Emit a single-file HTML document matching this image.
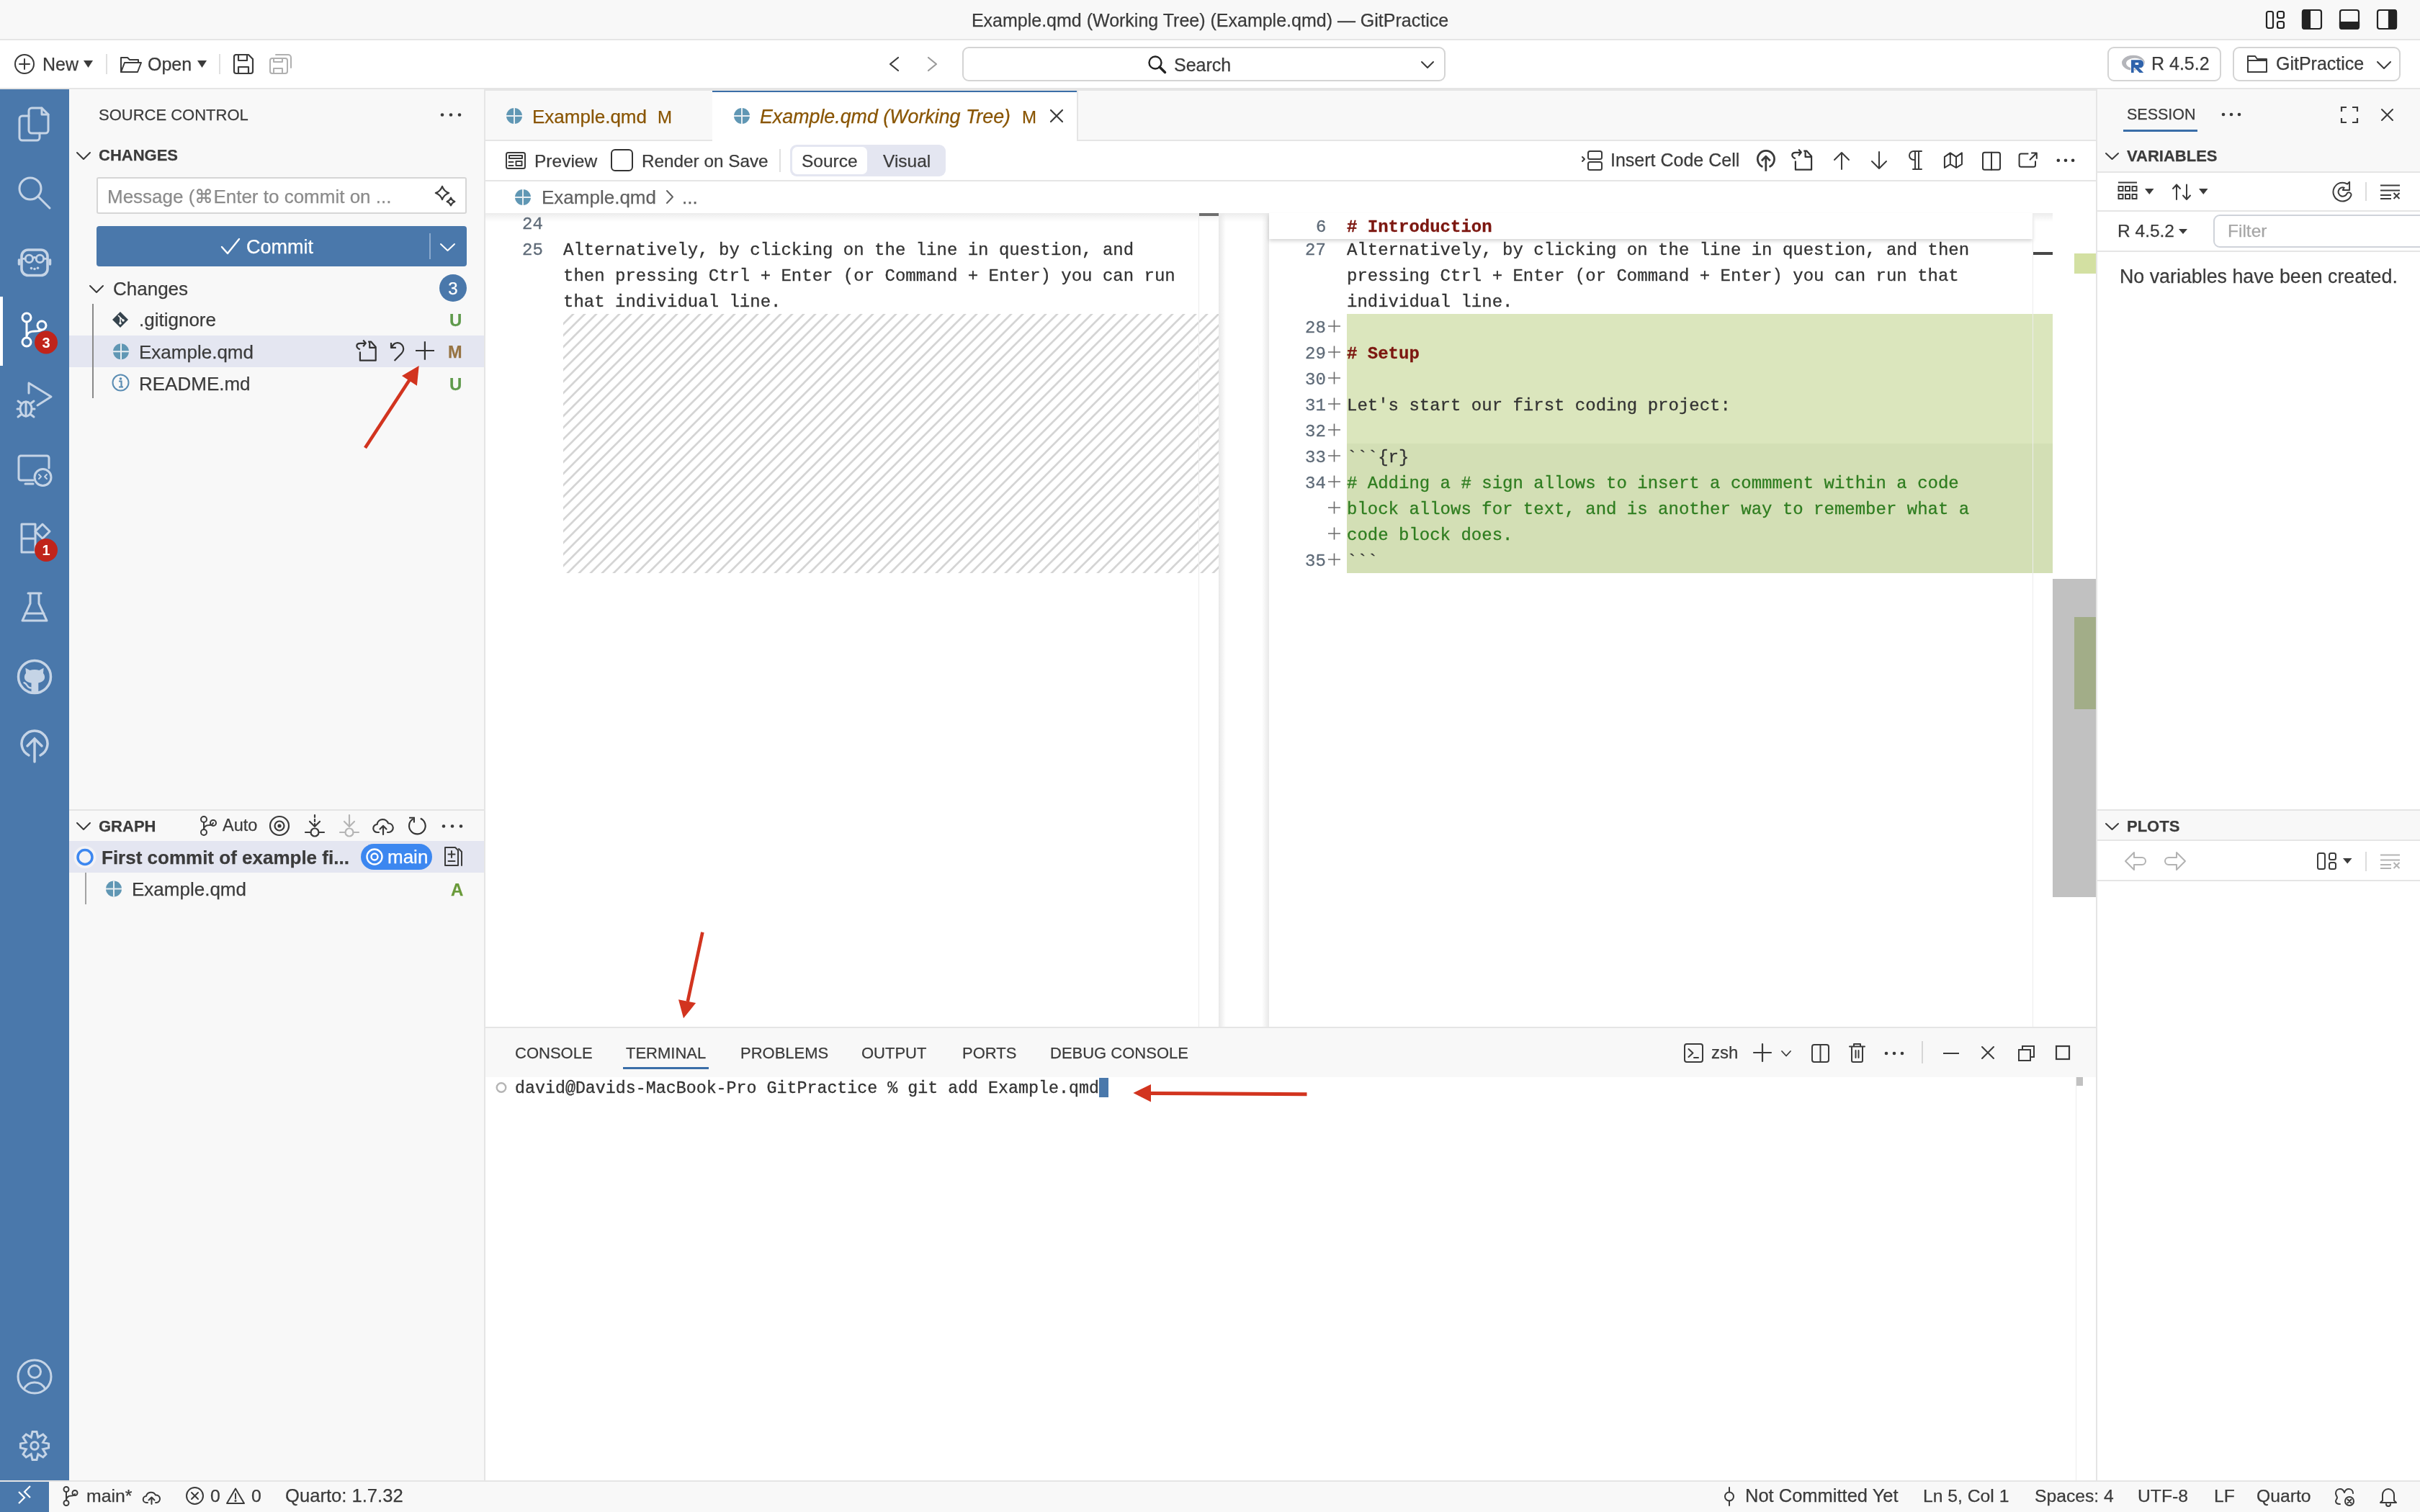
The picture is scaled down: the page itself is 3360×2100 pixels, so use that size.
<!DOCTYPE html>
<html><head><meta charset="utf-8">
<style>
*{box-sizing:border-box;margin:0;padding:0}
html,body{width:3360px;height:2100px;overflow:hidden;background:#fff;font-family:"Liberation Sans",sans-serif;color:#3b3b3b}
.a{position:absolute}
.t{position:absolute;white-space:pre;line-height:1;will-change:transform;-webkit-text-stroke:0.25px currentColor}
.m{font-family:"Liberation Mono",monospace;-webkit-text-stroke:0.3px currentColor}
svg{position:absolute;overflow:visible}
</style></head><body>
<div class="a" style="left:0px;top:0px;width:3360px;height:56px;background:#f8f8f8;border-bottom:2px solid #e5e5e5"></div>
<div class="a" style="left:0px;top:56px;width:3360px;height:68px;background:#fff;border-bottom:2px solid #e5e5e5"></div>
<div class="a" style="left:0px;top:124px;width:96px;height:1932px;background:#4a78ab"></div>
<div class="a" style="left:96px;top:124px;width:578px;height:1932px;background:#f8f8f8;border-right:2px solid #e5e5e5"></div>
<div class="a" style="left:674px;top:124px;width:2236px;height:1302px;background:#fff"></div>
<div class="a" style="left:674px;top:124px;width:2236px;height:72px;background:#f8f8f8;border-top:2px solid #e5e5e5;border-bottom:2px solid #e5e5e5"></div>
<div class="a" style="left:674px;top:196px;width:2236px;height:56px;background:#fff;border-bottom:2px solid #e5e5e5"></div>
<div class="a" style="left:2910px;top:124px;width:450px;height:1932px;background:#f8f8f8;border-left:2px solid #e5e5e5"></div>
<div class="a" style="left:674px;top:1426px;width:2236px;height:630px;background:#fff;border-top:2px solid #e5e5e5"></div>
<div class="a" style="left:674px;top:1428px;width:2236px;height:68px;background:#f8f8f8"></div>
<div class="a" style="left:0px;top:2056px;width:3360px;height:44px;background:#f8f8f8;border-top:2px solid #e5e5e5"></div>
<div class="a" style="left:0px;top:2058px;width:68px;height:42px;background:#4a78ab"></div>
<div class="t " style="top:15.8px;font-size:25px;color:#3b3b3b;left:1680px;transform:translateX(-50%);">Example.qmd (Working Tree) (Example.qmd) — GitPractice</div>
<svg style="left:3146px;top:15px" width="26" height="25" viewBox="0 0 26 25" fill="none" stroke="#222" stroke-width="2.2" stroke-linecap="round" stroke-linejoin="round" ><rect x="1" y="1" width="9" height="23" rx="2.5"/><rect x="16" y="1" width="9" height="9" rx="2.5"/><rect x="16" y="15" width="9" height="9" rx="2.5"/></svg>
<svg style="left:3196px;top:13px" width="28" height="28" viewBox="0 0 28 28" fill="none" stroke="#222" stroke-width="2.2" stroke-linecap="round" stroke-linejoin="round" ><rect x="1" y="1" width="26" height="26" rx="3"/><path d="M1 4a3 3 0 0 1 3-3h7v26H4a3 3 0 0 1-3-3z" fill="#222"/></svg>
<svg style="left:3248px;top:13px" width="28" height="28" viewBox="0 0 28 28" fill="none" stroke="#222" stroke-width="2.2" stroke-linecap="round" stroke-linejoin="round" ><rect x="1" y="1" width="26" height="26" rx="3"/><path d="M1 18h26v6a3 3 0 0 1-3 3H4a3 3 0 0 1-3-3z" fill="#222"/></svg>
<svg style="left:3300px;top:13px" width="28" height="28" viewBox="0 0 28 28" fill="none" stroke="#222" stroke-width="2.2" stroke-linecap="round" stroke-linejoin="round" ><rect x="1" y="1" width="26" height="26" rx="3"/><path d="M17 1h7a3 3 0 0 1 3 3v20a3 3 0 0 1-3 3h-7z" fill="#222"/></svg>
<svg style="left:20px;top:75px" width="28" height="28" viewBox="0 0 28 28" fill="none" stroke="#3b3b3b" stroke-width="2" stroke-linecap="round" stroke-linejoin="round" ><circle cx="14" cy="14" r="13"/><path d="M14 7v14M7 14h14"/></svg>
<div class="t " style="top:76.8px;font-size:25px;color:#3b3b3b;left:59px;">New</div>
<svg style="left:116px;top:84px" width="13" height="10" viewBox="0 0 13 10" fill="none" stroke="#3b3b3b" stroke-width="2" stroke-linecap="round" stroke-linejoin="round" ><path d="M0 0h13L6.5 10z" fill="#3b3b3b" stroke="none"/></svg>
<div class="a" style="left:147px;top:75px;width:2px;height:28px;background:#e0e0e0"></div>
<svg style="left:167px;top:78px" width="30" height="23" viewBox="0 0 30 23" fill="none" stroke="#3b3b3b" stroke-width="2" stroke-linecap="round" stroke-linejoin="round" ><path d="M1 22V2h9l3 3h12v4"/><path d="M1 22l5-13h23l-5 13z"/></svg>
<div class="t " style="top:76.8px;font-size:25px;color:#3b3b3b;left:205px;">Open</div>
<svg style="left:274px;top:84px" width="13" height="10" viewBox="0 0 13 10" fill="none" stroke="#3b3b3b" stroke-width="2" stroke-linecap="round" stroke-linejoin="round" ><path d="M0 0h13L6.5 10z" fill="#3b3b3b" stroke="none"/></svg>
<div class="a" style="left:304px;top:75px;width:2px;height:28px;background:#e0e0e0"></div>
<svg style="left:324px;top:75px" width="28" height="28" viewBox="0 0 28 28" fill="none" stroke="#3b3b3b" stroke-width="2.2" stroke-linecap="round" stroke-linejoin="round" ><path d="M3 1h18l6 6v17a3 3 0 0 1-3 3H4a3 3 0 0 1-3-3V4a3 3 0 0 1 2-3z"/><path d="M7 1v8h12V1M7 27v-9h14v9"/></svg>
<svg style="left:374px;top:75px" width="31" height="28" viewBox="0 0 31 28" fill="none" stroke="#b0b0b0" stroke-width="2" stroke-linecap="round" stroke-linejoin="round" ><path d="M9 1h17a4 4 0 0 1 4 4v14"/><rect x="1" y="6" width="24" height="21" rx="3"/><path d="M6 27v-7h12v7M6 6v5h12V6"/></svg>
<svg style="left:1234px;top:79px" width="15" height="20" viewBox="0 0 15 20" fill="none" stroke="#3b3b3b" stroke-width="2.2" stroke-linecap="round" stroke-linejoin="round" ><path d="M13 1L2 10l11 9"/></svg>
<svg style="left:1288px;top:79px" width="14" height="20" viewBox="0 0 14 20" fill="none" stroke="#9a9a9a" stroke-width="2.2" stroke-linecap="round" stroke-linejoin="round" ><path d="M1 1l11 9-11 9"/></svg>
<div class="a" style="left:1336px;top:65px;width:671px;height:48px;border:2px solid #d4d4d4;border-radius:9px;background:#fff"></div>
<svg style="left:1594px;top:77px" width="25" height="25" viewBox="0 0 25 25" fill="none" stroke="#222" stroke-width="2.4" stroke-linecap="round" stroke-linejoin="round" ><circle cx="10" cy="10" r="8.5"/><path d="M16 16l7.5 7.5" stroke-width="3.5"/></svg>
<div class="t " style="top:77.8px;font-size:25px;color:#3b3b3b;left:1630px;">Search</div>
<svg style="left:1973px;top:85px" width="18" height="10" viewBox="0 0 18 10" fill="none" stroke="#3b3b3b" stroke-width="2" stroke-linecap="round" stroke-linejoin="round" ><path d="M1 1l8 8 8-8"/></svg>
<div class="a" style="left:2926px;top:65px;width:158px;height:48px;border:2px solid #d4d4d4;border-radius:9px;background:#fff"></div>
<svg style="left:2946px;top:76px" width="32" height="26" viewBox="0 0 32 26"><path fill-rule="evenodd" fill="#b4b5ba" d="M15.9 0.7a15.9 10.6 0 1 0 0.01 0zM18 4.8a12 7.1 0 1 0 0.01 0z"/><g fill="#2f63ab" stroke="#fff" stroke-width="1.4" style="paint-order:stroke"><path fill-rule="evenodd" d="M13 7.3h13a4.2 5.3 0 0 1 0 10.7h-2.5l6.7 7h-5.7l-6.7-7h-1.2V25H13zM18.6 11v3.1h4.6v-3.1z"/></g></svg>
<div class="t " style="top:76.2px;font-size:25px;color:#3b3b3b;left:2987px;">R 4.5.2</div>
<div class="a" style="left:3100px;top:65px;width:233px;height:48px;border:2px solid #d4d4d4;border-radius:9px;background:#fff"></div>
<svg style="left:3120px;top:77px" width="28" height="24" viewBox="0 0 28 24" fill="none" stroke="#3b3b3b" stroke-width="2" stroke-linecap="round" stroke-linejoin="round" ><path d="M1 23V1h10l3 4h13v18z"/><path d="M1 7h26"/></svg>
<div class="t " style="top:76.2px;font-size:25px;color:#3b3b3b;left:3160px;">GitPractice</div>
<svg style="left:3300px;top:85px" width="20" height="11" viewBox="0 0 20 11" fill="none" stroke="#3b3b3b" stroke-width="2" stroke-linecap="round" stroke-linejoin="round" ><path d="M1 1l9 9 9-9"/></svg>
<div class="a" style="left:0px;top:412px;width:4px;height:96px;background:#fff"></div>
<svg style="left:0;top:0" width="96" height="2100" viewBox="0 0 96 2100">
<g stroke="#c5d4e6" stroke-width="3" fill="none" stroke-linecap="round" stroke-linejoin="round">
 <!-- explorer -->
 <path d="M40 160v-6a4 4 0 0 1 4-4h14l9 9v22a4 4 0 0 1-4 4H44a4 4 0 0 1-4-4z"/>
 <path d="M58 150v9h9"/>
 <path d="M40 161h-9a4 4 0 0 0-4 4v26a4 4 0 0 0 4 4h20a4 4 0 0 0 4-4v-6"/>
 <!-- search -->
 <circle cx="42" cy="262" r="15"/>
 <path d="M53 273l16 16"/>
 <!-- assistant robot -->
 <rect x="30" y="347" width="36" height="35.5" rx="9" stroke-width="3.6"/>
 <path d="M26.5 361v6M69.5 361v6" stroke-width="3.5"/>
 <circle cx="40.4" cy="359.4" r="5.2" stroke-width="2.8"/><circle cx="55.4" cy="359.4" r="5.2" stroke-width="2.8"/>
 <path d="M45.5 358.5q2.5-2 4.8 0M30 359.4h5.2M60.6 359.4h5.4" stroke-width="2.8"/>
</g>
<g fill="#c5d4e6"><circle cx="43.5" cy="372.6" r="1.8"/><circle cx="48" cy="373.5" r="1.8"/><circle cx="52.5" cy="372.3" r="1.8"/></g>
<!-- source control (active, white) -->
<g stroke="#fff" stroke-width="3" fill="none">
 <circle cx="37" cy="441" r="6"/><circle cx="37" cy="475" r="6"/><circle cx="58" cy="452" r="6"/>
 <path d="M37 447v22M37 469c0-8 6-9 12-9s9-2 9-2"/>
</g>
<circle cx="64" cy="475.5" r="16" fill="#c0241b"/>
<text x="64" y="482.5" font-family="Liberation Sans" font-weight="bold" font-size="20" fill="#fff" text-anchor="middle">3</text>
<g stroke="#c5d4e6" stroke-width="3" fill="none" stroke-linecap="round" stroke-linejoin="round">
 <!-- run & debug -->
 <path d="M40 532l31 19-19 12M40 532v14"/>
 <ellipse cx="36" cy="568" rx="8" ry="10"/>
 <path d="M28 568h-4M44 568h4M29 560l-4-3M43 560l4-3M29 576l-4 3M43 576l4 3M36 558v20"/>
 <!-- remote explorer -->
 <path d="M46 667H29a3 3 0 0 1-3-3V636a3 3 0 0 1 3-3h36a3 3 0 0 1 3 3v14"/>
 <path d="M35 672h11"/>
 <circle cx="59.5" cy="663" r="11.5"/>
 <path d="M54 659l3 3-3 3M65 659l-3 3 3 3" stroke-width="2"/>
 <!-- extensions -->
 <path d="M30 728h19v39H30zM30 748h19"/>
 <path d="M49 738l10-10 10 10-10 10z"/>
 <!-- testing flask -->
 <path d="M39 824h18M42 824v14l-11 24h34l-11-24v-14M35 852h26"/>
</g>
<circle cx="64" cy="764" r="16" fill="#c0241b"/>
<text x="64" y="771" font-family="Liberation Sans" font-weight="bold" font-size="20" fill="#fff" text-anchor="middle">1</text>
<!-- github -->
<circle cx="48" cy="940" r="22.5" stroke="#c5d4e6" stroke-width="3.5" fill="none"/>
<path d="M36 935l-0.6-7.2 6.2 3.2c1.8-.6 4-.9 6.4-.9s4.6.3 6.4.9l6.2-3.2-.6 7.2c1.3 1.5 2.1 3.4 2.1 5.4 0 5-4.6 8.4-14.1 8.4s-14.1-3.4-14.1-8.4c0-2 .8-3.9 2.1-5.4z" fill="#c5d4e6"/>
<path d="M43.5 947h9.8v14.5h-9.8z" fill="#c5d4e6"/>
<path d="M33.5 948.3c2.2.4 3.2 2.2 4.4 4s2.8 3.2 5 3.2" stroke="#c5d4e6" stroke-width="2.4" fill="none" stroke-linecap="round"/>
<!-- publish -->
<g stroke="#c5d4e6" stroke-width="3.5" fill="none" stroke-linecap="round">
 <path d="M40 1049a18 18 0 1 1 16 0"/>
 <path d="M48 1058v-32M38 1036l10-10 10 10"/>
</g>
<!-- accounts -->
<g stroke="#c5d4e6" stroke-width="3" fill="none">
 <circle cx="48" cy="1912" r="23"/>
 <circle cx="48" cy="1905" r="8.5"/>
 <path d="M33 1930c3-7 8-10 15-10s12 3 15 10"/>
</g>
<!-- settings gear -->
<g stroke="#c5d4e6" stroke-width="3" fill="none" stroke-linejoin="miter">
 <circle cx="48" cy="2008" r="5.2"/>
 <path d="M43.18 1996.36 L45.07 1988.42 L50.93 1988.42 L52.82 1996.36 L59.78 1992.08 L63.92 1996.22 L59.64 2003.18 L67.58 2005.07 L67.58 2010.93 L59.64 2012.82 L63.92 2019.78 L59.78 2023.92 L52.82 2019.64 L50.93 2027.58 L45.07 2027.58 L43.18 2019.64 L36.22 2023.92 L32.08 2019.78 L36.36 2012.82 L28.42 2010.93 L28.42 2005.07 L36.36 2003.18 L32.08 1996.22 L36.22 1992.08z"/>
</g>
</svg>
<svg style="left:0;top:2058px" width="68" height="42" viewBox="0 0 68 42"><path d="M26 14l8 8-8 8M42 6l-8 8 8 8" stroke="#fff" stroke-width="2.2" fill="none"/></svg>
<div class="t " style="top:148.8px;font-size:22px;color:#3b3b3b;left:137px;">SOURCE CONTROL</div>
<svg style="left:0;top:0" width="1" height="1" overflow="visible"><g fill="#3b3b3b"><circle cx="614" cy="159.5" r="2.3"/><circle cx="626" cy="159.5" r="2.3"/><circle cx="638" cy="159.5" r="2.3"/></g></svg>
<svg style="left:106px;top:211px" width="20" height="11" viewBox="0 0 20 11" fill="none" stroke="#3b3b3b" stroke-width="2" stroke-linecap="round" stroke-linejoin="round" ><path d="M1 1l9 9 9-9"/></svg>
<div class="t " style="top:205.3px;font-size:22px;color:#3b3b3b;font-weight:700;left:137px;">CHANGES</div>
<div class="a" style="left:134px;top:246px;width:514px;height:51px;background:#fff;border:2px solid #d6d6d6;border-radius:3px"></div>
<div class="t " style="top:260.4px;font-size:26px;color:#8b8b8b;left:149px;">Message (⌘Enter to commit on ...</div>
<svg style="left:596px;top:250px" width="44" height="44" viewBox="0 0 44 44" fill="none" stroke="#3b3b3b" stroke-width="2.2" stroke-linecap="round" stroke-linejoin="round" ><path d="M18 8.8C19.656 13.4 22.6 16.344 27.2 18C22.6 19.656 19.656 22.6 18 27.2C16.344 22.6 13.4 19.656 8.8 18C13.4 16.344 16.344 13.4 18 8.8z"/><path d="M30 24.6C30.972 27.3 32.7 29.028 35.4 30C32.7 30.972 30.972 32.7 30 35.4C29.028 32.7 27.3 30.972 24.6 30C27.3 29.028 29.028 27.3 30 24.6z"/></svg>
<div class="a" style="left:134px;top:314px;width:514px;height:56px;background:#4a78ab;border-radius:4px"></div>
<svg style="left:307px;top:331px" width="26" height="22" viewBox="0 0 26 22" fill="none" stroke="#fff" stroke-width="2.4" stroke-linecap="round" stroke-linejoin="round" ><path d="M1 12l8 9L25 1"/></svg>
<div class="t " style="top:329.6px;font-size:27px;color:#fff;left:342px;">Commit</div>
<div class="a" style="left:596px;top:324px;width:2px;height:36px;background:#8aa9cc"></div>
<svg style="left:611px;top:338px" width="21" height="11" viewBox="0 0 21 11" fill="none" stroke="#fff" stroke-width="2" stroke-linecap="round" stroke-linejoin="round" ><path d="M1 1l9.5 9 9.5-9"/></svg>
<svg style="left:124px;top:396px" width="20" height="11" viewBox="0 0 20 11" fill="none" stroke="#3b3b3b" stroke-width="2" stroke-linecap="round" stroke-linejoin="round" ><path d="M1 1l9 9 9-9"/></svg>
<div class="t " style="top:387.9px;font-size:26px;color:#3b3b3b;left:157px;">Changes</div>
<svg style="left:0;top:0" width="1" height="1" overflow="visible"><circle cx="629" cy="400" r="19" fill="#4a78ab"/></svg>
<div class="t " style="top:389.1px;font-size:24px;color:#fff;left:629px;transform:translateX(-50%);">3</div>
<div class="a" style="left:96px;top:466px;width:576px;height:44px;background:#e4e6f1"></div>
<div class="a" style="left:128px;top:422px;width:2px;height:131px;background:#8a8a8a"></div>
<svg style="left:156px;top:433px" width="22" height="22" viewBox="0 0 22 22"><path d="M11 0l11 11-11 11L0 11z" fill="#35434d"/><path d="M8 5l3 3v8M11 8l4 4" stroke="#f8f8f8" stroke-width="1.6" fill="none"/><circle cx="11" cy="16" r="1.8" fill="#f8f8f8"/><circle cx="15" cy="12" r="1.8" fill="#f8f8f8"/></svg>
<div class="t " style="top:431.4px;font-size:26px;color:#3b3b3b;left:193px;">.gitignore</div>
<div class="t " style="top:433.1px;font-size:24px;color:#5f9a4c;font-weight:700;left:624px;">U</div>
<svg style="left:0;top:0" width="1" height="1" overflow="visible"><circle cx="168" cy="488.3" r="11" fill="#6097b4"/><path d="M168 477.3v22M157 488.3h22" stroke="#e8eef2" stroke-width="2"/></svg>
<div class="t " style="top:475.9px;font-size:26px;color:#3b3b3b;left:193px;">Example.qmd</div>
<svg style="left:488px;top:466px" width="160" height="44" viewBox="0 0 160 44" fill="none" stroke="#333" stroke-width="2.2" stroke-linecap="butt" stroke-linejoin="round"><path d="M11.9 19.2C8.5 18 7.3 16 7.3 14.5 7.3 12 9.5 10.8 12 10.8h7.8M16.2 6.6l3.6 4-3.6 4.6"/><path d="M11.9 22.5v12.2h21.8V15.9l-6.6-7.3h-4M25.2 8.6v8.3h8.5"/><path d="M55 9.9v7h6.9M56 16C58 12 61 10.2 64 10.2c4.8 0 8.2 4 8.2 8.5 0 2.6-1.2 4.5-2.8 6.2L59.6 35"/><path d="M89 21h26M101.9 8.3v25.5"/></svg>
<div class="t " style="top:477.5px;font-size:23.5px;color:#977443;font-weight:700;left:622px;">M</div>
<svg style="left:155px;top:519px" width="25" height="25" viewBox="0 0 25 25"><circle cx="12.5" cy="12.5" r="11" stroke="#5b8db3" stroke-width="2" fill="none"/><circle cx="12.5" cy="7" r="1.8" fill="#5b8db3"/><path d="M10 10.5h3.5v8M10 18.5h6" stroke="#5b8db3" stroke-width="2.2" fill="none"/></svg>
<div class="t " style="top:519.9px;font-size:26px;color:#3b3b3b;left:193px;">README.md</div>
<div class="t " style="top:521.6px;font-size:24px;color:#5f9a4c;font-weight:700;left:624px;">U</div>
<div class="a" style="left:96px;top:1124px;width:576px;height:2px;background:#e5e5e5"></div>
<svg style="left:106px;top:1142px" width="20" height="11" viewBox="0 0 20 11" fill="none" stroke="#3b3b3b" stroke-width="2" stroke-linecap="round" stroke-linejoin="round" ><path d="M1 1l9 9 9-9"/></svg>
<div class="t " style="top:1136.8px;font-size:22px;color:#3b3b3b;font-weight:700;left:137px;">GRAPH</div>
<svg style="left:278px;top:1133px" width="22" height="27" viewBox="0 0 22 27" fill="none" stroke="#3b3b3b" stroke-width="2" stroke-linecap="round" stroke-linejoin="round" ><circle cx="5" cy="5" r="4"/><circle cx="5" cy="23" r="4"/><circle cx="18" cy="10" r="4"/><path d="M5 9v10M5 19c0-5 4-6 8-6s5-3 5-3"/></svg>
<div class="t " style="top:1135.0px;font-size:23.5px;color:#3b3b3b;left:308.5px;">Auto</div>
<svg style="left:374px;top:1133px" width="28" height="28" viewBox="0 0 28 28" fill="none" stroke="#3b3b3b" stroke-width="2.2" stroke-linecap="round" stroke-linejoin="round" ><circle cx="14" cy="14" r="13"/><circle cx="14" cy="14" r="6.5"/><circle cx="14" cy="14" r="1.5" fill="#3b3b3b"/></svg>
<svg style="left:424px;top:1131px" width="26" height="32" viewBox="0 0 26 32" fill="none" stroke="#3b3b3b" stroke-width="2.2" stroke-linecap="round" stroke-linejoin="round" ><path d="M13 1v3M13 7v3M13 13v3" /><path d="M6 10l7 7 7-7"/><circle cx="13" cy="25" r="5.5"/><path d="M0 25h7.5M18.5 25H26"/></svg>
<svg style="left:472px;top:1131px" width="26" height="32" viewBox="0 0 26 32" fill="none" stroke="#b5b5b5" stroke-width="2.2" stroke-linecap="round" stroke-linejoin="round" ><path d="M13 1v16"/><path d="M6 10l7 7 7-7"/><circle cx="13" cy="25" r="5.5"/><path d="M0 25h7.5M18.5 25H26"/></svg>
<svg style="left:518px;top:1136px" width="28" height="24" viewBox="0 0 28 24" fill="none" stroke="#3b3b3b" stroke-width="2.2" stroke-linecap="round" stroke-linejoin="round" ><path d="M8 20H6a5.5 5.5 0 0 1-.5-11A8 8 0 0 1 21 7.5 6 6 0 0 1 22 20h-2"/><path d="M14 23V11M9.5 15.5L14 11l4.5 4.5"/></svg>
<svg style="left:0;top:0" width="1" height="1" overflow="visible"><g fill="none" stroke="#333" stroke-width="2.1"><path d="M583.8 1136.7A11.3 11.3 0 1 1 573.5 1137.4"/><path d="M568.1 1135.8H574.9V1142.6"/></g></svg>
<svg style="left:0;top:0" width="1" height="1" overflow="visible"><g fill="#3b3b3b"><circle cx="616" cy="1147.5" r="2.3"/><circle cx="628" cy="1147.5" r="2.3"/><circle cx="640" cy="1147.5" r="2.3"/></g></svg>
<div class="a" style="left:96px;top:1168px;width:576px;height:44px;background:#e4e6f1"></div>
<svg style="left:0;top:0" width="1" height="1" overflow="visible"><circle cx="118" cy="1190.5" r="15.5" fill="#f3f3f6"/><circle cx="118" cy="1190.5" r="10" stroke="#3c87f0" stroke-width="3.5" fill="none"/></svg>
<div class="t " style="top:1178.4px;font-size:26px;color:#3b3b3b;font-weight:700;left:140.5px;">First commit of example fi...</div>
<div class="a" style="left:501px;top:1172px;width:99px;height:36px;background:#3c87f0;border-radius:18px"></div>
<svg style="left:508px;top:1178px" width="24" height="24" viewBox="0 0 24 24" fill="none" stroke="#fff" stroke-width="2.4" stroke-linecap="round" stroke-linejoin="round" ><circle cx="12" cy="12" r="10.5"/><circle cx="12" cy="12" r="4.5"/></svg>
<div class="t " style="top:1177.4px;font-size:26px;color:#fff;left:538px;">main</div>
<svg style="left:615px;top:1176px" width="29" height="28" viewBox="0 0 29 28" fill="none" stroke="#3b3b3b" stroke-width="2" stroke-linecap="round" stroke-linejoin="round" ><path d="M3 1h14l4 4v21H3z"/><path d="M22 3l4 4v19M12 6v9M7.5 10.5h9M7.5 20h9"/></svg>
<div class="a" style="left:118px;top:1212px;width:2px;height:44px;background:#a3a3a3"></div>
<svg style="left:0;top:0" width="1" height="1" overflow="visible"><circle cx="158" cy="1234.5" r="11" fill="#6097b4"/><path d="M158 1223.5v22M147 1234.5h22" stroke="#e8eef2" stroke-width="2"/></svg>
<div class="t " style="top:1221.9px;font-size:26px;color:#3b3b3b;left:182.5px;">Example.qmd</div>
<div class="t " style="top:1223.6px;font-size:24px;color:#6a9a3a;font-weight:700;left:626px;">A</div>
<div class="a" style="left:989px;top:126px;width:506px;height:70px;background:#fff;border-top:2px solid #3a6ea8"></div>
<div class="a" style="left:1495px;top:126px;width:2px;height:70px;background:#e5e5e5"></div>
<svg style="left:0;top:0" width="1" height="1" overflow="visible"><circle cx="714" cy="161" r="11" fill="#6097b4"/><path d="M714 150v22M703 161h22" stroke="#e8eef2" stroke-width="2"/><circle cx="1030" cy="161" r="11" fill="#6097b4"/><path d="M1030 150v22M1019 161h22" stroke="#e8eef2" stroke-width="2"/><circle cx="726" cy="274" r="11" fill="#6097b4"/><path d="M726 263v22M715 274h22" stroke="#e8eef2" stroke-width="2"/></svg>
<div class="t " style="top:149.4px;font-size:26px;color:#895503;left:739px;">Example.qmd</div>
<div class="t " style="top:151.1px;font-size:24px;color:#895503;left:913px;">M</div>
<div class="t " style="top:148.7px;font-size:26.8px;color:#895503;font-style:italic;left:1055px;">Example.qmd (Working Tree)</div>
<div class="t " style="top:151.1px;font-size:24px;color:#895503;left:1418.5px;">M</div>
<svg style="left:1458px;top:152px" width="18" height="18" viewBox="0 0 18 18" fill="none" stroke="#3b3b3b" stroke-width="2.2" stroke-linecap="round" stroke-linejoin="round" ><path d="M1 1l16 16M17 1L1 17"/></svg>
<svg style="left:702px;top:211px" width="28" height="24" viewBox="0 0 28 24" fill="none" stroke="#3b3b3b" stroke-width="2" stroke-linecap="round" stroke-linejoin="round" ><rect x="1" y="1" width="26" height="22" rx="2.5"/><rect x="5" y="5" width="18" height="4"/><path d="M4.5 14h6M4.5 19h6"/><rect x="14.5" y="13" width="8" height="6"/></svg>
<div class="t " style="top:211.7px;font-size:24.5px;color:#3b3b3b;left:741.5px;">Preview</div>
<div class="a" style="left:848px;top:207px;width:31px;height:31px;border:2.2px solid #333;border-radius:6px;background:#fff"></div>
<div class="t " style="top:211.8px;font-size:24.3px;color:#3b3b3b;left:891px;">Render on Save</div>
<div class="a" style="left:1082px;top:207px;width:2px;height:32px;background:#e0e0e0"></div>
<div class="a" style="left:1097px;top:201px;width:216px;height:44px;background:#e4e6f1;border-radius:9px"></div>
<div class="a" style="left:1100px;top:204px;width:104px;height:38px;background:#fff;border-radius:7px"></div>
<div class="t " style="top:211.7px;font-size:24.5px;color:#3b3b3b;left:1113px;">Source</div>
<div class="t " style="top:211.7px;font-size:24.5px;color:#3b3b3b;left:1226px;">Visual</div>
<svg style="left:2196px;top:209px" width="29" height="28" viewBox="0 0 29 28" fill="none" stroke="#3b3b3b" stroke-width="2" stroke-linecap="round" stroke-linejoin="round" ><path d="M1 9l3 3-3 3"/><rect x="9" y="1" width="19" height="11" rx="2.5"/><rect x="9" y="16" width="19" height="11" rx="2.5"/></svg>
<div class="t " style="top:210.2px;font-size:25px;color:#3b3b3b;left:2236px;">Insert Code Cell</div>
<svg style="left:2439px;top:207px" width="26" height="32" viewBox="0 0 26 32" fill="none" stroke="#3b3b3b" stroke-width="2.8"  stroke-linejoin="round" stroke-linecap="butt"><path d="M8.4 24.7A11.6 11.6 0 1 1 17.5 24.7"/><path d="M12.8 30.7V10.2M6.9 16.3L12.8 10.2 18.8 16.3"/></svg>
<svg style="left:2481px;top:201px" width="40" height="40" viewBox="0 0 40 40" fill="none" stroke="#333" stroke-width="2.2" stroke-linecap="butt" stroke-linejoin="round"><path d="M11.9 19.2C8.5 18 7.3 16 7.3 14.5 7.3 12 9.5 10.8 12 10.8h7.8M16.2 6.6l3.6 4-3.6 4.6"/><path d="M11.9 22.5v12.2h22.2V15.9l-6.8-7.3h-4M25.6 8.6v8.3h8.5"/></svg>
<svg style="left:2546px;top:210px" width="22" height="26" viewBox="0 0 22 26" fill="none" stroke="#3b3b3b" stroke-width="2" stroke-linecap="round" stroke-linejoin="round" ><path d="M11 25V2M1 12L11 2l10 10"/></svg>
<svg style="left:2598px;top:210px" width="22" height="26" viewBox="0 0 22 26" fill="none" stroke="#3b3b3b" stroke-width="2" stroke-linecap="round" stroke-linejoin="round" ><path d="M11 1v23M1 14l10 10 10-10"/></svg>
<svg style="left:2650px;top:209px" width="19" height="28" viewBox="0 0 19 28" fill="none" stroke="#3b3b3b" stroke-width="2" stroke-linecap="round" stroke-linejoin="round" ><path d="M9 26V1h9M14 26V1M9 1H7a6 6 0 0 0 0 12h2M6 26h12"/></svg>
<svg style="left:0;top:0" width="1" height="1" overflow="visible"><g fill="none" stroke="#333" stroke-width="2" stroke-linejoin="round" stroke-linecap="round"><path d="M2699.9 217.8L2707.8 212.4 2716 217.8 2723.9 212.4V228.1L2716 233 2707.8 228.1 2699.9 233zM2707.8 212.4V228.1M2716 217.8V233"/><rect x="2753" y="211.8" width="24" height="24" rx="2.5"/><path d="M2765 211.8v24"/><path d="M2816.4 213.6h-10.3a2.5 2.5 0 0 0-2.5 2.5v13.2a2.5 2.5 0 0 0 2.5 2.5h17.4a2.5 2.5 0 0 0 2.5-2.5v-5.7" stroke-linecap="butt"/><path d="M2818 222.3l9.6-9.6M2820.2 212.6h7.6v8.1" stroke-linecap="butt"/></g><g fill="#333"><circle cx="2857.8" cy="222.8" r="2.3"/><circle cx="2868" cy="222.8" r="2.3"/><circle cx="2878.1" cy="222.8" r="2.3"/></g></svg>
<div class="t " style="top:261.4px;font-size:26px;color:#616161;left:751.5px;">Example.qmd</div>
<svg style="left:925px;top:264px" width="10" height="19" viewBox="0 0 10 19" fill="none" stroke="#616161" stroke-width="2" stroke-linecap="round" stroke-linejoin="round" ><path d="M1 1l8 8.5L1 18"/></svg>
<div class="t " style="top:261.4px;font-size:26px;color:#616161;left:947px;">...</div>
<div class="a" style="left:674px;top:296px;width:1088px;height:12px;background:linear-gradient(#ececec,rgba(255,255,255,0))"></div>
<svg style="left:782px;top:436px" width="910" height="360"><defs><pattern id="hatch" width="16" height="16" x="-2" y="0" patternUnits="userSpaceOnUse"><path d="M-4 4L4-4M0 16L16 0M12 20L20 12" stroke="#d4d4d4" stroke-width="2.7" stroke-linecap="square"/></pattern></defs><rect width="910" height="360" fill="#fff"/><rect width="910" height="360" fill="url(#hatch)"/></svg>
<div class="t m" style="top:299.8px;font-size:24px;color:#5f6b78;right:2606.5px;">24</div>
<div class="t m" style="top:335.8px;font-size:24px;color:#5f6b78;right:2606.5px;">25</div>
<div class="t m" style="top:335.8px;font-size:24px;color:#333333;left:782px;">Alternatively, by clicking on the line in question, and</div>
<div class="t m" style="top:371.8px;font-size:24px;color:#333333;left:782px;">then pressing Ctrl + Enter (or Command + Enter) you can run</div>
<div class="t m" style="top:407.8px;font-size:24px;color:#333333;left:782px;">that individual line.</div>
<div class="a" style="left:1664px;top:296px;width:1px;height:1130px;background:#ececec"></div>
<div class="a" style="left:1665px;top:296px;width:27px;height:4px;background:#6e6e6e"></div>
<div class="a" style="left:1692px;top:296px;width:10px;height:1130px;background:linear-gradient(90deg,#e8e8e8,rgba(255,255,255,0))"></div>
<div class="a" style="left:1752px;top:296px;width:10px;height:1130px;background:linear-gradient(270deg,#e8e8e8,rgba(255,255,255,0))"></div>
<div class="a" style="left:1870px;top:436px;width:980px;height:360px;background:#dbe6bd"></div>
<div class="a" style="left:1870px;top:616px;width:980px;height:180px;background:#d3dfb5"></div>
<div class="t m" style="top:335.8px;font-size:24px;color:#5f6b78;right:1519px;">27</div>
<div class="t m" style="top:335.8px;font-size:24px;color:#333333;left:1870px;">Alternatively, by clicking on the line in question, and then</div>
<div class="t m" style="top:371.8px;font-size:24px;color:#333333;left:1870px;">pressing Ctrl + Enter (or Command + Enter) you can run that</div>
<div class="t m" style="top:407.8px;font-size:24px;color:#333333;left:1870px;">individual line.</div>
<div class="t m" style="top:443.8px;font-size:24px;color:#5f6b78;right:1519px;">28</div>
<div class="t m" style="top:479.8px;font-size:24px;color:#5f6b78;right:1519px;">29</div>
<div class="t m" style="top:479.8px;font-size:24px;color:#7c1710;font-weight:700;left:1870px;"># Setup</div>
<div class="t m" style="top:515.8px;font-size:24px;color:#5f6b78;right:1519px;">30</div>
<div class="t m" style="top:551.8px;font-size:24px;color:#5f6b78;right:1519px;">31</div>
<div class="t m" style="top:551.8px;font-size:24px;color:#333333;left:1870px;">Let's start our first coding project:</div>
<div class="t m" style="top:587.8px;font-size:24px;color:#5f6b78;right:1519px;">32</div>
<div class="t m" style="top:623.8px;font-size:24px;color:#5f6b78;right:1519px;">33</div>
<div class="t m" style="top:623.8px;font-size:24px;color:#333333;left:1870px;">```{r}</div>
<div class="t m" style="top:659.8px;font-size:24px;color:#5f6b78;right:1519px;">34</div>
<div class="t m" style="top:659.8px;font-size:24px;color:#2f7d20;left:1870px;"># Adding a # sign allows to insert a commment within a code</div>
<div class="t m" style="top:695.8px;font-size:24px;color:#2f7d20;left:1870px;">block allows for text, and is another way to remember what a</div>
<div class="t m" style="top:731.8px;font-size:24px;color:#2f7d20;left:1870px;">code block does.</div>
<div class="t m" style="top:767.8px;font-size:24px;color:#5f6b78;right:1519px;">35</div>
<div class="t m" style="top:767.8px;font-size:24px;color:#333333;left:1870px;">```</div>
<svg style="left:0;top:0" width="1" height="1" overflow="visible"><g stroke="#6b6b6b" stroke-width="1.6" fill="none"><path d="M1844 453h17M1852.5 444.5v17"/><path d="M1844 489h17M1852.5 480.5v17"/><path d="M1844 525h17M1852.5 516.5v17"/><path d="M1844 561h17M1852.5 552.5v17"/><path d="M1844 597h17M1852.5 588.5v17"/><path d="M1844 633h17M1852.5 624.5v17"/><path d="M1844 669h17M1852.5 660.5v17"/><path d="M1844 705h17M1852.5 696.5v17"/><path d="M1844 741h17M1852.5 732.5v17"/><path d="M1844 777h17M1852.5 768.5v17"/></g></svg>
<div class="a" style="left:1762px;top:296px;width:1060px;height:36px;background:#fff;box-shadow:0 3px 5px rgba(0,0,0,0.16)"></div>
<div class="t m" style="top:303.8px;font-size:24px;color:#5f6b78;right:1519px;">6</div>
<div class="t m" style="top:303.8px;font-size:24px;color:#7c1710;font-weight:700;left:1870px;"># Introduction</div>
<div class="a" style="left:2822px;top:296px;width:1px;height:1130px;background:#ececec"></div>
<div class="a" style="left:2823px;top:296px;width:27px;height:12px;background:linear-gradient(#ececec,rgba(255,255,255,0))"></div>
<div class="a" style="left:2823px;top:350px;width:27px;height:4px;background:#474747"></div>
<div class="a" style="left:2880px;top:352px;width:30px;height:28px;background:#d3e0a2"></div>
<div class="a" style="left:2850px;top:804px;width:60px;height:442px;background:#c1c1c1"></div>
<div class="a" style="left:2880px;top:857px;width:30px;height:128px;background:#a2ad88"></div>
<div class="t " style="top:1452.3px;font-size:22px;color:#3b3b3b;left:714.5px;">CONSOLE</div>
<div class="t " style="top:1452.3px;font-size:22px;color:#3b3b3b;left:869px;">TERMINAL</div>
<div class="a" style="left:865px;top:1482px;width:119px;height:2.5px;background:#3a6ea8"></div>
<div class="t " style="top:1452.3px;font-size:22px;color:#3b3b3b;left:1028px;">PROBLEMS</div>
<div class="t " style="top:1452.3px;font-size:22px;color:#3b3b3b;left:1195.5px;">OUTPUT</div>
<div class="t " style="top:1452.3px;font-size:22px;color:#3b3b3b;left:1335.5px;">PORTS</div>
<div class="t " style="top:1452.3px;font-size:22px;color:#3b3b3b;left:1457.5px;">DEBUG CONSOLE</div>
<svg style="left:2338px;top:1449px" width="27" height="27" viewBox="0 0 27 27" fill="none" stroke="#3b3b3b" stroke-width="2" stroke-linecap="round" stroke-linejoin="round" ><rect x="1" y="1" width="25" height="25" rx="3"/><path d="M6.5 8l6 5.5-6 5.5M14 20h6"/></svg>
<div class="t " style="top:1450.1px;font-size:24px;color:#3b3b3b;left:2376px;">zsh</div>
<svg style="left:2434px;top:1449px" width="26" height="26" viewBox="0 0 26 26" fill="none" stroke="#3b3b3b" stroke-width="2.2" stroke-linecap="round" stroke-linejoin="round" ><path d="M13 1v24M1 13h24"/></svg>
<svg style="left:2473px;top:1459px" width="14" height="9" viewBox="0 0 14 9" fill="none" stroke="#3b3b3b" stroke-width="1.8" stroke-linecap="round" stroke-linejoin="round" ><path d="M1 1l6 6.5 6-6.5"/></svg>
<svg style="left:2515px;top:1450px" width="25" height="26" viewBox="0 0 25 26" fill="none" stroke="#3b3b3b" stroke-width="2" stroke-linecap="round" stroke-linejoin="round" ><rect x="1" y="1" width="23" height="24" rx="3"/><path d="M12.5 1v24"/></svg>
<svg style="left:2567px;top:1448px" width="23" height="29" viewBox="0 0 23 29" fill="none" stroke="#3b3b3b" stroke-width="2" stroke-linecap="round" stroke-linejoin="round" ><path d="M1 5.5h21M7 5V2h9v3M4 6v19a2 2 0 0 0 2 2h11a2 2 0 0 0 2-2V6M9.5 11v10M13.5 11v10"/></svg>
<svg style="left:0;top:0" width="1" height="1" overflow="visible"><g fill="#3b3b3b"><circle cx="2619" cy="1463" r="2.3"/><circle cx="2630" cy="1463" r="2.3"/><circle cx="2641" cy="1463" r="2.3"/></g></svg>
<div class="a" style="left:2668px;top:1446px;width:2px;height:31px;background:#d6d6d6"></div>
<div class="a" style="left:2698px;top:1462px;width:22px;height:2.2px;background:#3b3b3b"></div>
<svg style="left:2751px;top:1453px" width="18" height="18" viewBox="0 0 18 18" fill="none" stroke="#3b3b3b" stroke-width="2" stroke-linecap="round" stroke-linejoin="round" ><path d="M1 1l16 16M17 1L1 17"/></svg>
<svg style="left:2802px;top:1452px" width="23" height="22" viewBox="0 0 23 22" fill="none" stroke="#3b3b3b" stroke-width="2"   stroke-linecap="butt" stroke-linejoin="miter"><rect x="1" y="6" width="16" height="15"/><path d="M6 6V1h16v15h-5"/></svg>
<svg style="left:2854px;top:1452px" width="20" height="20" viewBox="0 0 20 20" fill="none" stroke="#3b3b3b" stroke-width="2.2" stroke-linecap="round"  stroke-linejoin="miter"><rect x="1" y="1" width="18" height="18"/></svg>
<svg style="left:0;top:0" width="1" height="1" overflow="visible"><circle cx="696" cy="1510.5" r="6.3" stroke="#b5b5b5" stroke-width="2.4" fill="none"/></svg>
<div class="t m" style="top:1501.3px;font-size:23.3px;color:#333333;left:714.5px;">david@Davids-MacBook-Pro GitPractice % git add Example.qmd</div>
<div class="a" style="left:1526px;top:1497px;width:13px;height:27px;background:#4a78ab"></div>
<div class="a" style="left:2882px;top:1496px;width:1px;height:560px;background:#ececec"></div>
<div class="a" style="left:2883px;top:1496px;width:9px;height:12px;background:#c1c1c1"></div>
<div class="a" style="left:2912px;top:239px;width:448px;height:1817px;background:#fff"></div>
<div class="a" style="left:2912px;top:124px;width:448px;height:114px;background:#f8f8f8"></div>
<div class="t " style="top:149.2px;font-size:21.5px;color:#3b3b3b;left:2952.5px;">SESSION</div>
<div class="a" style="left:2948px;top:180px;width:103px;height:2.5px;background:#3a6ea8"></div>
<svg style="left:0;top:0" width="1" height="1" overflow="visible"><g fill="#3b3b3b"><circle cx="3087" cy="159" r="2.3"/><circle cx="3098" cy="159" r="2.3"/><circle cx="3109" cy="159" r="2.3"/></g></svg>
<svg style="left:3250px;top:148px" width="24" height="23" viewBox="0 0 24 23" fill="none" stroke="#3b3b3b" stroke-width="2.2"   stroke-linecap="butt" stroke-linejoin="miter"><path d="M1 7V1h7M16 1h7v6M23 16v6h-7M8 22H1v-6"/></svg>
<svg style="left:3306px;top:151px" width="17" height="17" viewBox="0 0 17 17" fill="none" stroke="#3b3b3b" stroke-width="2" stroke-linecap="round" stroke-linejoin="round" ><path d="M1 1l15 15M16 1L1 16"/></svg>
<svg style="left:2923px;top:212px" width="19" height="10" viewBox="0 0 19 10" fill="none" stroke="#3b3b3b" stroke-width="2" stroke-linecap="round" stroke-linejoin="round" ><path d="M1 1l8.5 8 8.5-8"/></svg>
<div class="t " style="top:205.8px;font-size:22px;color:#3b3b3b;font-weight:700;left:2953px;">VARIABLES</div>
<div class="a" style="left:2912px;top:238px;width:448px;height:2px;background:#e5e5e5"></div>
<svg style="left:2940px;top:252px" width="28" height="26" viewBox="0 0 28 26" fill="none" stroke="#3b3b3b" stroke-width="2"   stroke-linecap="butt" stroke-linejoin="miter"><path d="M1 1.5h26"/><rect x="1.5" y="7" width="6" height="6"/><rect x="11" y="7" width="6" height="6"/><rect x="20.5" y="7" width="6" height="6"/><rect x="1.5" y="18" width="6" height="6"/><rect x="11" y="18" width="6" height="6"/><rect x="20.5" y="18" width="6" height="6"/></svg>
<svg style="left:2978px;top:262px" width="13" height="8" viewBox="0 0 13 8" fill="none" stroke="#3b3b3b" stroke-width="2" stroke-linecap="round" stroke-linejoin="round" ><path d="M0 0h12.5L6.25 8z" fill="#3b3b3b" stroke="none"/></svg>
<svg style="left:3016px;top:255px" width="26" height="23" viewBox="0 0 26 23" fill="none" stroke="#3b3b3b" stroke-width="2" stroke-linecap="round" stroke-linejoin="round" ><path d="M6 22V1.5M1 7l5-5.5L11 7M20 1.5V22M15 16.5l5 5.5 5-5.5"/></svg>
<svg style="left:3053px;top:262px" width="13" height="8" viewBox="0 0 13 8" fill="none" stroke="#3b3b3b" stroke-width="2" stroke-linecap="round" stroke-linejoin="round" ><path d="M0 0h12.5L6.25 8z" fill="#3b3b3b" stroke="none"/></svg>
<svg style="left:3234px;top:248px" width="36" height="36" viewBox="0 0 36 36" fill="none" stroke="#3b3b3b" stroke-width="2" stroke-linecap="round" stroke-linejoin="round" ><path d="M25.2 7.6A12.9 12.9 0 1 0 30.2 23.8A3 3 0 0 0 24.4 21.2A6.2 6.2 0 1 1 20.7 12.6L18.8 16H28.1V4.8z"/></svg>
<div class="a" style="left:3284px;top:253px;width:2px;height:26px;background:#dcdcdc"></div>
<svg style="left:3304px;top:256px" width="29" height="21" viewBox="0 0 29 21" fill="none" stroke="#3b3b3b" stroke-width="2"  stroke-linejoin="round" stroke-linecap="butt"><path d="M1 1.5h27M1 8.5h27M1 15h15M1 20h15M19.5 12l8 8M27.5 12l-8 8"/></svg>
<div class="a" style="left:2912px;top:292px;width:448px;height:2px;background:#e5e5e5"></div>
<div class="t " style="top:309.2px;font-size:24.5px;color:#3b3b3b;left:2939.5px;">R 4.5.2</div>
<svg style="left:3025px;top:318px" width="12" height="7" viewBox="0 0 12 7" fill="none" stroke="#3b3b3b" stroke-width="2" stroke-linecap="round" stroke-linejoin="round" ><path d="M0 0h12L6 7z" fill="#3b3b3b" stroke="none"/></svg>
<div class="a" style="left:3073px;top:298px;width:300px;height:46px;border:2px solid #cfd3da;border-radius:9px;background:#fff"></div>
<div class="t " style="top:309.2px;font-size:24.5px;color:#a6a6a6;left:3092.5px;">Filter</div>
<div class="a" style="left:2912px;top:348px;width:448px;height:2px;background:#e5e5e5"></div>
<div class="t " style="top:371.2px;font-size:26.8px;color:#3b3b3b;left:2942.5px;">No variables have been created.</div>
<div class="a" style="left:2912px;top:1124px;width:448px;height:44px;background:#f8f8f8;border-top:2px solid #e5e5e5;border-bottom:2px solid #e5e5e5"></div>
<svg style="left:2923px;top:1143px" width="19" height="10" viewBox="0 0 19 10" fill="none" stroke="#3b3b3b" stroke-width="2" stroke-linecap="round" stroke-linejoin="round" ><path d="M1 1l8.5 8 8.5-8"/></svg>
<div class="t " style="top:1136.8px;font-size:22px;color:#3b3b3b;font-weight:700;left:2953px;">PLOTS</div>
<svg style="left:2950px;top:1183px" width="32" height="26" viewBox="0 0 32 26" fill="none" stroke="#b3b3b3" stroke-width="2" stroke-linecap="round" stroke-linejoin="round" ><path d="M13 1L1 13l12 12v-7h11a5 5 0 0 0 0-10H13z"/></svg>
<svg style="left:3003px;top:1183px" width="32" height="26" viewBox="0 0 32 26" fill="none" stroke="#b3b3b3" stroke-width="2" stroke-linecap="round" stroke-linejoin="round" ><path d="M19 1l12 12-12 12v-7H8a5 5 0 0 1 0-10h11z"/></svg>
<svg style="left:3217px;top:1184px" width="27" height="24" viewBox="0 0 27 24" fill="none" stroke="#3b3b3b" stroke-width="2" stroke-linecap="round" stroke-linejoin="round" ><rect x="1" y="1" width="10" height="22" rx="2.5"/><rect x="17" y="1" width="9" height="9" rx="2.5"/><rect x="17" y="14" width="9" height="9" rx="2.5"/></svg>
<svg style="left:3253px;top:1192px" width="13" height="8" viewBox="0 0 13 8" fill="none" stroke="#3b3b3b" stroke-width="2" stroke-linecap="round" stroke-linejoin="round" ><path d="M0 0h12.5L6.25 7.5z" fill="#3b3b3b" stroke="none"/></svg>
<div class="a" style="left:3284px;top:1183px;width:2px;height:27px;background:#dcdcdc"></div>
<svg style="left:3304px;top:1186px" width="29" height="21" viewBox="0 0 29 21" fill="none" stroke="#b3b3b3" stroke-width="2"  stroke-linejoin="round" stroke-linecap="butt"><path d="M1 1.5h27M1 8.5h27M1 15h15M1 20h15M19.5 12l8 8M27.5 12l-8 8"/></svg>
<div class="a" style="left:2912px;top:1222px;width:448px;height:2px;background:#e5e5e5"></div>
<svg style="left:87px;top:2064px" width="22" height="28" viewBox="0 0 22 28" fill="none" stroke="#3b3b3b" stroke-width="2" stroke-linecap="round" stroke-linejoin="round" ><circle cx="5" cy="4.5" r="3.5"/><circle cx="5" cy="23.5" r="3.5"/><circle cx="17" cy="9.5" r="3.5"/><path d="M5 8v12M5 20c0-5 3-6.5 7-6.5s5-2.5 5-2.5"/></svg>
<div class="t " style="top:2065.9px;font-size:24.8px;color:#3b3b3b;left:119.5px;">main*</div>
<svg style="left:198px;top:2070px" width="25" height="19" viewBox="0 0 25 19" fill="none" stroke="#3b3b3b" stroke-width="2" stroke-linecap="round" stroke-linejoin="round" ><path d="M7 17H5.5a4.5 4.5 0 0 1-.5-9A7 7 0 0 1 18 6.5a5 5 0 0 1 1.5 10.5H18"/><path d="M12.5 19V9.5M8.5 13.5l4-4 4 4"/></svg>
<svg style="left:258px;top:2065px" width="25" height="25" viewBox="0 0 25 25" fill="none" stroke="#3b3b3b" stroke-width="2" stroke-linecap="round" stroke-linejoin="round" ><circle cx="12.5" cy="12.5" r="11.5"/><path d="M8 8l9 9M17 8l-9 9"/></svg>
<div class="t " style="top:2065.9px;font-size:24.8px;color:#3b3b3b;left:292px;">0</div>
<svg style="left:314px;top:2066px" width="26" height="23" viewBox="0 0 26 23" fill="none" stroke="#3b3b3b" stroke-width="2" stroke-linecap="round" stroke-linejoin="round" ><path d="M13 1.5L1 22h24z"/><path d="M13 8.5v7"/><circle cx="13" cy="18.5" r="0.6" fill="#3b3b3b"/></svg>
<div class="t " style="top:2065.9px;font-size:24.8px;color:#3b3b3b;left:348.5px;">0</div>
<div class="t " style="top:2065.2px;font-size:25.6px;color:#3b3b3b;left:395.5px;">Quarto: 1.7.32</div>
<svg style="left:2393px;top:2065px" width="16" height="27" viewBox="0 0 16 27" fill="none" stroke="#3b3b3b" stroke-width="2" stroke-linecap="round" stroke-linejoin="round" ><circle cx="8" cy="13.5" r="6"/><path d="M8 1v6.5M8 19.5V26"/></svg>
<div class="t " style="top:2065.3px;font-size:25.5px;color:#3b3b3b;left:2423px;">Not Committed Yet</div>
<div class="t " style="top:2066.0px;font-size:24.7px;color:#3b3b3b;left:2670px;">Ln 5, Col 1</div>
<div class="t " style="top:2066.0px;font-size:24.7px;color:#3b3b3b;left:2825px;">Spaces: 4</div>
<div class="t " style="top:2066.0px;font-size:24.7px;color:#3b3b3b;left:2968px;">UTF-8</div>
<div class="t " style="top:2066.0px;font-size:24.7px;color:#3b3b3b;left:3073.5px;">LF</div>
<div class="t " style="top:2066.0px;font-size:24.7px;color:#3b3b3b;left:3132.5px;">Quarto</div>
<svg style="left:3242px;top:2067px" width="28" height="24" viewBox="0 0 28 24" fill="none" stroke="#3b3b3b" stroke-width="2" stroke-linecap="round" stroke-linejoin="round" ><path d="M13 6c-1-3-3-5-6-5S1 3 1 7c0 3 2 4 2 6s-2 3-2 5c0 3 3 4 6 4M13 6c1-3 3-5 6-5 3 0 6 2 6 6"/><circle cx="20" cy="18" r="6"/><path d="M17.5 15.5l5 5M22.5 15.5l-5 5"/></svg>
<svg style="left:3304px;top:2066px" width="24" height="25" viewBox="0 0 24 25" fill="none" stroke="#3b3b3b" stroke-width="2" stroke-linecap="round" stroke-linejoin="round" ><path d="M4 18V10a8 8 0 0 1 16 0v8l3 3H1z"/><path d="M9 23a3 3 0 0 0 6 0"/></svg>
<svg style="left:0;top:0" width="1" height="1" overflow="visible">
<g fill="#d2341f" stroke="#d2341f" stroke-linecap="butt">
 <path d="M507 622L569 527" stroke-width="4.6" fill="none"/>
 <path d="M581.7 508L558 522L578.9 535.8z" stroke="none"/>
 <path d="M975.4 1294.8L954.8 1391" stroke-width="4.6" fill="none"/>
 <path d="M949 1414.3L942 1388.3L966.1 1393.1z" stroke="none"/>
 <path d="M1814.5 1519.8L1597 1518.4" stroke-width="5" fill="none"/>
 <path d="M1573.4 1517.9L1598 1505.9L1598 1530.5z" stroke="none"/>
</g></svg></body></html>
